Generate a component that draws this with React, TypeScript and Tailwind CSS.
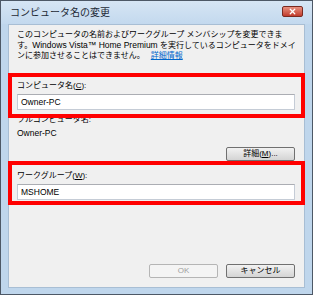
import { X } from "lucide-react";

const font = { fontFamily: '"Liberation Sans", "Noto Sans CJK JP", sans-serif' };

function Field({ value }: { value: string }) {
  return (
    <div className="mr-[9px] flex h-[16px] items-center border border-[#c5ccd6] border-t-[#abadb3] bg-white pl-[3px] text-[8.5px] text-black">
      {value}
    </div>
  );
}

function Btn({ children, disabled }: { children: React.ReactNode; disabled?: boolean }) {
  return (
    <button
      className={`flex h-[14px] w-[69px] items-center justify-center rounded-[2px] border text-[8px] ${
        disabled
          ? "border-[#b5b5b5] bg-[#f4f4f4] text-[#a0a0a0]"
          : "border-[#707070] bg-gradient-to-b from-[#f2f2f2] to-[#d4d4d4] text-black"
      }`}
    >
      {children}
    </button>
  );
}

export default function App() {
  return (
    <div className="relative h-[295px] w-[313px] overflow-hidden border border-[#4d5866] bg-[#bfd6ec]" style={font}>
      {/* title bar */}
      <div className="flex h-[23px] items-center justify-between bg-gradient-to-b from-[#d6e5f4] to-[#c3d9ee] pl-[9px] pr-[9px]">
        <span className="text-[10px] text-[#1e2a36]">コンピュータ名の変更</span>
        <div className="mt-[-3px] flex h-[11px] w-[21px] items-center justify-center rounded-[2px] border border-[#7a2a20] bg-gradient-to-b from-[#e89080] to-[#c0392b]">
          <X size={9} strokeWidth={3.5} className="text-white" />
        </div>
      </div>

      {/* client area */}
      <div className="ml-[7px] flex h-[264px] w-[297px] flex-col border border-[#a8bed4] bg-[#f0f0f0] pl-[8px] text-[8px] text-black">
        <div className="mt-[5px] whitespace-nowrap leading-[10px]">
          <p>このコンピュータの名前およびワークグループ メンバシップを変更できま</p>
          <p>
            す。<span className="text-[8.5px]">Windows Vista™ Home Premium </span>を実行しているコンピュータをドメイ
          </p>
          <p>
            ンに参加させることはできません。
            <span className="ml-[6px] text-[#0066cc] underline">詳細情報</span>
          </p>
        </div>

        <p className="mt-[20px] leading-[10px]">
          コンピュータ名(<span className="underline">C</span>):
        </p>
        <div className="mt-[3px]">
          <Field value="Owner-PC" />
        </div>

        <p className="mt-[5px] leading-[10px]">フルコンピュータ名:</p>
        <p className="mt-[3px] text-[8.5px] leading-[10px]">Owner-PC</p>

        <div className="mt-[9px] flex justify-end pr-[9px]">
          <Btn>
            詳細(<span className="underline">M</span>)...
          </Btn>
        </div>

        <p className="mt-[10px] leading-[10px]">
          ワークグループ(<span className="underline">W</span>):
        </p>
        <div className="mt-[3px]">
          <Field value="MSHOME" />
        </div>

        <div className="mb-[9px] mt-auto flex justify-end gap-[8px] pr-[9px]">
          <Btn disabled>OK</Btn>
          <Btn>キャンセル</Btn>
        </div>
      </div>

      {/* annotation boxes */}
      <div className="absolute left-[7px] top-[72px] h-[45px] w-[297px] border-[4px] border-[#ff0000]" />
      <div className="absolute left-[7px] top-[160px] h-[44px] w-[297px] border-[4px] border-[#ff0000]" />
    </div>
  );
}
